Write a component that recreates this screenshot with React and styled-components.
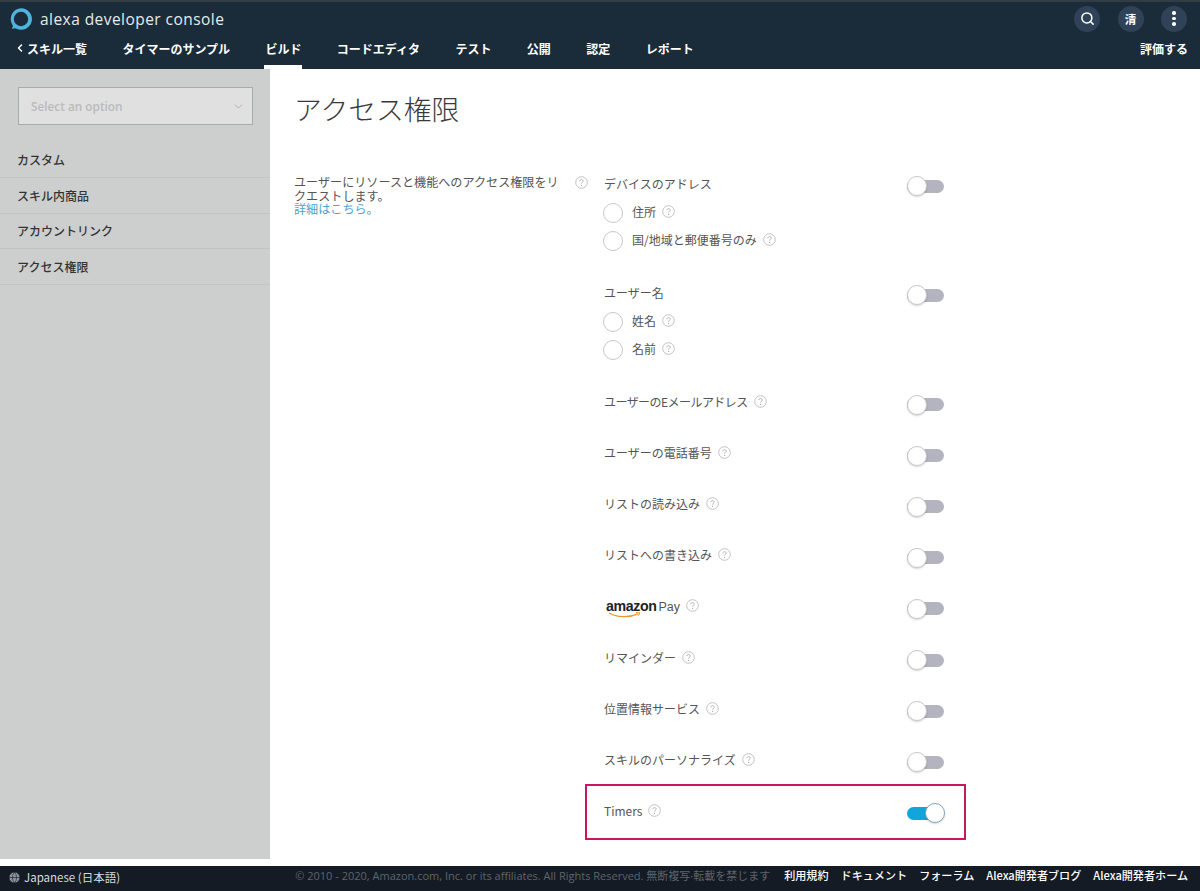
import React from 'react';
import styled, { createGlobalStyle } from 'styled-components';
import { Search, ChevronLeft, ChevronDown, Globe } from 'lucide-react';

const JP = `"Noto Sans CJK JP", "Noto Sans", "Liberation Sans", sans-serif`;

const GlobalStyle = createGlobalStyle`
  html, body { margin: 0; padding: 0; background: #fff; }
  body { font-family: ${JP}; width: 1200px; height: 891px; overflow: hidden; }
  * { box-sizing: border-box; }
`;

const Header = styled.header`
  height: 69px;
  background: #1a2c3a;
  border-top: 2px solid #333c44;
  color: #fff;
`;

const TopBar = styled.div`
  height: 35px;
  display: flex;
  align-items: center;
  padding: 0 13px 2px 9px;
`;

const Brand = styled.div`
  font-family: "Open Sans", sans-serif;
  font-size: 15.5px;
  letter-spacing: 0.45px;
  color: #e6eaed;
  margin-left: 7px;
  flex: 1;
  padding-top: 1px;
`;

const RoundButton = styled.div`
  width: 26px;
  height: 26px;
  border-radius: 50%;
  background: #2f4257;
  margin-left: 17.5px;
  display: flex;
  align-items: center;
  justify-content: center;
  font-size: 11.5px;
  font-weight: 700;
`;

const Dots = styled.span`
  display: flex;
  flex-direction: column;
  gap: 2px;
  i {
    width: 3.5px;
    height: 3.5px;
    border-radius: 50%;
    background: #fff;
  }
`;

const Nav = styled.nav`
  height: 32px;
  display: flex;
  padding: 0 12px 0 15px;
  font-size: 12px;
  font-weight: 700;
`;

const NavItem = styled.a`
  position: relative;
  display: flex;
  align-items: center;
  height: 100%;
  margin-right: 35.4px;
  padding-bottom: 10px;
  white-space: nowrap;
  &:last-child { margin-right: 0; margin-left: auto; }
  svg { margin: 0 1px 0 -1px; }
  ${p => p.$active && `
    &::after {
      content: "";
      position: absolute;
      left: -1px;
      right: -1px;
      bottom: 0;
      height: 4px;
      background: #fff;
    }
  `}
`;

const Body = styled.div`
  display: flex;
  height: 790px;
`;

const Sidebar = styled.aside`
  width: 270px;
  background: #cdcfce;
  padding-top: 18px;
`;

const SelectBox = styled.div`
  width: 235px;
  height: 38px;
  margin: 0 0 17px 18px;
  background: #dfe0df;
  border: 1px solid #a9abaa;
  display: flex;
  align-items: center;
  justify-content: space-between;
  padding: 0 7px 0 12px;
  color: #b9bbbb;
  font-family: "Open Sans", sans-serif;
  font-size: 11.8px;
  font-weight: 600;
`;

const SideItem = styled.div`
  height: 35.8px;
  display: flex;
  align-items: center;
  padding: 0 0 0 17px;
  border-bottom: 1px solid #c2c4c3;
  color: #333;
  font-size: 12px;
  font-weight: 500;
`;

const Main = styled.main`
  flex: 1;
  padding: 21px 0 0 24px;
`;

const Title = styled.h1`
  margin: 0 0 43px;
  font-size: 27.8px;
  line-height: 36px;
  font-weight: 300;
  color: #3a3a3a;
`;

const Columns = styled.div`
  display: flex;
`;

const Description = styled.div`
  width: 270px;
  margin-top: 6px;
  font-size: 12.1px;
  line-height: 13.5px;
  color: #555;
  a { color: #4aa5c9; display: block; }
`;

const DescHelp = styled.div`
  width: 41px;
  padding: 1px 0 0 12px;
  margin-left: -1px;
`;

const List = styled.div`
  position: relative;
  width: 340px;
  margin-top: 1px;
`;

const Group = styled.div`
  margin-bottom: ${p => p.$gap}px;
`;

const Row = styled.div`
  display: flex;
  align-items: center;
  justify-content: space-between;
  height: ${p => p.$h || 28}px;
  color: #555;
  font-size: 12px;
`;

const Label = styled.span`
  display: flex;
  align-items: center;
  gap: 6px;
  white-space: nowrap;
  position: relative;
  top: -1px;
`;

const Tight = styled.span`
  letter-spacing: -0.55px;
`;

const RadioRow = styled.div`
  display: flex;
  align-items: center;
  height: 28px;
  gap: 9px;
  margin-left: -1px;
  color: #555;
  font-size: 12px;
`;

const Radio = styled.span`
  width: 20px;
  height: 20px;
  border-radius: 50%;
  border: 1px solid #c8c8c8;
  background: #fff;
  flex: none;
  position: relative;
  top: 1px;
`;

const Track = styled.span`
  position: relative;
  display: block;
  width: 37px;
  height: 13px;
  border-radius: 7px;
  margin-top: 4px;
  background: ${p => (p.$on ? '#12a5dc' : '#b4b4c0')};
`;

const Knob = styled.span`
  position: absolute;
  top: -3.5px;
  left: ${p => (p.$on ? '18px' : '0')};
  width: 20px;
  height: 20px;
  border-radius: 50%;
  background: #fff;
  border: 1px solid ${p => (p.$on ? '#7fa8ba' : '#c9c9c9')};
  box-shadow: 0 1px 2px rgba(0, 0, 0, 0.18);
`;

const Highlight = styled.div`
  position: absolute;
  left: -19px;
  right: -22px;
  bottom: -3px;
  height: 56px;
  border: 2.5px solid #c9175f;
  pointer-events: none;
`;

const AmazonPay = styled.span`
  display: inline-flex;
  align-items: baseline;
  position: relative;
  gap: 2px;
  margin-left: 2px;
  color: #555;
  font-family: "Liberation Sans", sans-serif;
  font-size: 12.5px;
  b {
    font-size: 14.2px;
    letter-spacing: -0.4px;
    color: #222;
  }
  svg {
    position: absolute;
    left: 2px;
    top: 14px;
  }
`;

const Footer = styled.footer`
  margin-top: 7px;
  height: 25px;
  background: #141b24;
  display: flex;
  align-items: center;
  padding: 0 12px 7px 8px;
  font-size: 11.5px;
  color: #fff;
`;

const Lang = styled.div`
  display: flex;
  align-items: center;
  gap: 3px;
  flex: 1;
  color: #d8dade;
  font-size: 11.5px;
  padding-top: 4px;
`;

const Copy = styled.span`
  color: #5f646b;
  font-size: 11px;
  font-family: "Open Sans", ${JP};
  margin-right: 14px;
  white-space: nowrap;
`;

const FootLink = styled.a`
  font-weight: 500;
  font-size: 11.1px;
  margin-left: ${p => (p.$first ? 0 : 12)}px;
  white-space: nowrap;
`;

const HelpIcon = () => (
  <svg width="13" height="13" viewBox="0 0 13 13" fill="none">
    <circle cx="6.5" cy="6.5" r="5.8" stroke="#bbb" strokeWidth="0.9" />
    <path d="M4.9 5.2c0-2.1 3.3-2.1 3.3-.1 0 1.2-1.6 1.2-1.6 2.6" stroke="#aaa" strokeWidth="0.9" />
    <circle cx="6.6" cy="9.4" r="0.6" fill="#aaa" />
  </svg>
);

const AlexaLogo = () => (
  <svg width="24" height="24" viewBox="0 0 24 24" fill="none">
    <path
      d="M12 1.2a10.8 10.8 0 1 1-4.4 20.6c-.9-.4-1.3-.6-2-.5l-2.6.6.7-2.5c.2-.8 0-1.2-.5-2A10.8 10.8 0 0 1 12 1.2Z"
      fill="#4db5dc"
    />
    <circle cx="12" cy="12" r="7.2" fill="#1a2c3a" />
  </svg>
);

const Toggle = ({ on }) => (
  <Track $on={on}>
    <Knob $on={on} />
  </Track>
);

const simpleRows = [
  <Tight>ユーザーのEメールアドレス</Tight>,
  'ユーザーの電話番号',
  'リストの読み込み',
  'リストへの書き込み',
];

const laterRows = ['リマインダー', '位置情報サービス', 'スキルのパーソナライズ'];

const navItems = ['タイマーのサンプル', 'ビルド', 'コードエディタ', 'テスト', '公開', '認定', 'レポート'];
const sideItems = ['カスタム', 'スキル内商品', 'アカウントリンク', 'アクセス権限'];
const footLinks = ['利用規約', 'ドキュメント', 'フォーラム', 'Alexa開発者ブログ', 'Alexa開発者ホーム'];

const PermissionGroup = ({ title, options, gap }) => (
  <Group $gap={gap}>
    <Row>
      <Label>{title}</Label>
      <Toggle />
    </Row>
    {options.map(o => (
      <RadioRow key={o}>
        <Radio />
        <Label>
          {o}
          <HelpIcon />
        </Label>
      </RadioRow>
    ))}
  </Group>
);

const PermissionRow = ({ children, on }) => (
  <Row $h={51.1}>
    <Label>
      {children}
      <HelpIcon />
    </Label>
    <Toggle on={on} />
  </Row>
);

const App = () => (
  <>
    <GlobalStyle />
    <Header>
      <TopBar>
        <AlexaLogo />
        <Brand>alexa developer console</Brand>
        <RoundButton><Search size={15} strokeWidth={2.4} /></RoundButton>
        <RoundButton>清</RoundButton>
        <RoundButton><Dots><i /><i /><i /></Dots></RoundButton>
      </TopBar>
      <Nav>
        <NavItem>
          <ChevronLeft size={12} strokeWidth={3} />
          スキル一覧
        </NavItem>
        {navItems.map(n => (
          <NavItem key={n} $active={n === 'ビルド'}>{n}</NavItem>
        ))}
        <NavItem>評価する</NavItem>
      </Nav>
    </Header>
    <Body>
      <Sidebar>
        <SelectBox>
          Select an option
          <ChevronDown size={13} strokeWidth={1.2} color="#999" />
        </SelectBox>
        {sideItems.map(s => <SideItem key={s}>{s}</SideItem>)}
      </Sidebar>
      <Main>
        <Title>アクセス権限</Title>
        <Columns>
          <Description>
            ユーザーにリソースと機能へのアクセス権限をリクエストします。
            <a>詳細はこちら。</a>
          </Description>
          <DescHelp><HelpIcon /></DescHelp>
          <List>
            <PermissionGroup title="デバイスのアドレス" options={['住所', '国/地域と郵便番号のみ']} gap={25} />
            <PermissionGroup title="ユーザー名" options={['姓名', '名前']} gap={14} />
            {simpleRows.map((r, i) => <PermissionRow key={i}>{r}</PermissionRow>)}
            <PermissionRow>
              <AmazonPay>
                <b>amazon</b>Pay
                <svg width="34" height="6" viewBox="0 0 34 6" fill="none">
                  <path d="M1 1c8 4.5 20 5 29 .8" stroke="#e99a2c" strokeWidth="1.3" />
                  <path d="M28 .6l4 .2-1.6 3" stroke="#e99a2c" strokeWidth="1" />
                </svg>
              </AmazonPay>
            </PermissionRow>
            {laterRows.map(r => <PermissionRow key={r}>{r}</PermissionRow>)}
            <PermissionRow on>Timers</PermissionRow>
            <Highlight />
          </List>
        </Columns>
      </Main>
    </Body>
    <Footer>
      <Lang>
        <Globe size={13} color="#14202c" fill="#8f959c" strokeWidth={1.2} />
        Japanese (日本語)
      </Lang>
      <Copy>© 2010 - 2020, Amazon.com, Inc. or its affiliates. All Rights Reserved. 無断複写·転載を禁じます</Copy>
      {footLinks.map((l, i) => <FootLink key={l} $first={i === 0}>{l}</FootLink>)}
    </Footer>
  </>
);

export default App;
